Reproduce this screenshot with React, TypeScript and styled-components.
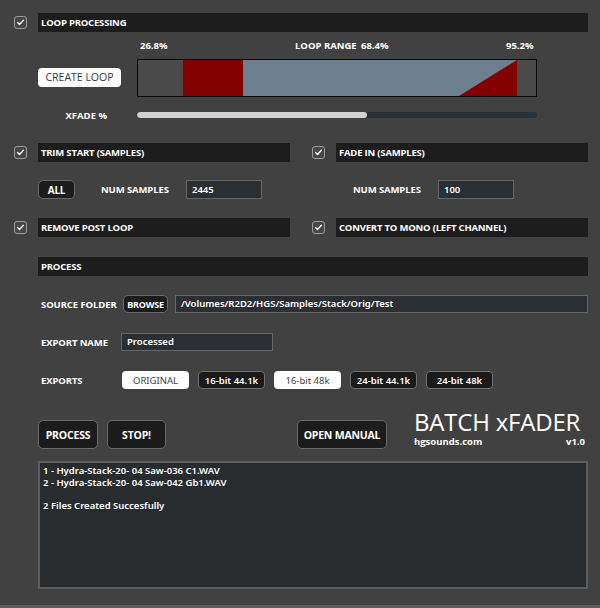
import React from 'react';
import styled, { createGlobalStyle } from 'styled-components';

const GlobalStyle = createGlobalStyle`
  html, body {
    margin: 0;
    padding: 0;
    background: #414141;
  }
  * {
    box-sizing: border-box;
  }
`;

const Window = styled.div`
  width: 600px;
  height: 608px;
  background: #414141;
  padding: 13px 12px 0 14px;
  font-family: 'Open Sans', 'Liberation Sans', sans-serif;
  color: #fff;
  display: flex;
  flex-direction: column;
  overflow: hidden;
  border-bottom: 3px solid #5c5c5c;
`;

const HeaderRow = styled.div<{ $mt?: number; $indent?: boolean }>`
  display: flex;
  align-items: center;
  gap: 11px;
  margin-top: ${(p) => p.$mt || 0}px;
  padding-left: ${(p) => (p.$indent ? 24 : 0)}px;
`;

const CheckBox = styled.div`
  width: 13px;
  height: 13px;
  border: 1px solid #9c9c9c;
  border-radius: 3px;
  background: #464646;
  display: flex;
  align-items: center;
  justify-content: center;
  flex-shrink: 0;
`;

const HeaderBar = styled.div`
  flex: 1;
  height: 19px;
  background: #1d1d1d;
  padding-left: 3px;
  font-size: 9.5px;
  font-weight: 700;
  line-height: 19px;
  letter-spacing: -0.2px;
  white-space: nowrap;
`;

const TwoCols = styled.div<{ $mt?: number }>`
  display: grid;
  grid-template-columns: 1fr 1fr;
  column-gap: 22px;
  margin-top: ${(p) => p.$mt || 0}px;
`;

const PercentRow = styled.div`
  display: flex;
  height: 10px;
  margin-top: 9px;
  align-items: center;
  font-size: 9.5px;
  font-weight: 700;
  white-space: nowrap;
`;

const Percent = styled.span<{ $at: number }>`
  position: absolute;
  left: ${(p) => p.$at}px;
`;

const PercentTrack = styled.div`
  position: relative;
  height: 10px;
  line-height: 10px;
  flex: 1;
`;

const BarRow = styled.div`
  display: flex;
  align-items: center;
  margin-top: 8px;
  padding-left: 24px;
  gap: 16px;
  height: 38px;
`;

const WhiteButton = styled.button<{ $w: number }>`
  width: ${(p) => p.$w}px;
  height: 19px;
  background: #fdfdfd;
  color: #3a3a3a;
  border: none;
  border-radius: 4px;
  font-family: 'Open Sans', 'Liberation Sans', sans-serif;
  font-size: 10.5px;
  padding: 0;
  margin-top: -2px;
`;

const LoopBox = styled.div`
  width: 400px;
  height: 38px;
  border: 1px solid #0a0a0a;
  background: #4a4a4a;
`;

const XfadeRow = styled.div`
  display: flex;
  align-items: center;
  margin-top: 13px;
  height: 10px;
`;

const XfadeLabel = styled.span`
  width: 93px;
  text-align: right;
  font-size: 9.5px;
  font-weight: 700;
  margin-right: 30px;
`;

const Slider = styled.div`
  width: 400px;
  height: 6px;
  border-radius: 3px;
  background: #29313a;
  overflow: hidden;
`;

const SliderFill = styled.div<{ $value: number }>`
  width: ${(p) => p.$value}%;
  height: 100%;
  border-radius: 3px;
  background: #d2d2d2;
`;

const ParamRow = styled.div<{ $pl: number }>`
  display: flex;
  align-items: center;
  height: 19px;
  margin-top: 18px;
  padding-left: ${(p) => p.$pl}px;
`;

const DarkButton = styled.button<{ $w: number; $h?: number; $fs?: number }>`
  width: ${(p) => p.$w}px;
  height: ${(p) => p.$h || 19}px;
  background: #1c1c1c;
  color: #fff;
  border: 1.5px solid #6a6a6a;
  border-radius: 5px;
  font-family: 'Open Sans', 'Liberation Sans', sans-serif;
  font-weight: 700;
  font-size: ${(p) => p.$fs || 10}px;
  letter-spacing: -0.2px;
  padding: 0;
  flex-shrink: 0;
  white-space: nowrap;
`;

const FieldLabel = styled.span<{ $w: number }>`
  width: ${(p) => p.$w}px;
  font-size: 9.5px;
  font-weight: 700;
  letter-spacing: -0.1px;
  white-space: nowrap;
  flex-shrink: 0;
`;

const Field = styled.div<{ $w?: number; $h?: number }>`
  ${(p) => (p.$w ? `width: ${p.$w}px;` : 'flex: 1;')}
  height: ${(p) => p.$h || 18}px;
  background: #2b2f33;
  border: 1px solid #666;
  padding-left: 5px;
  font-family: 'Noto Sans', 'DejaVu Sans', sans-serif;
  font-size: 9.5px;
  font-weight: 600;
  line-height: ${(p) => (p.$h || 18) - 2}px;
  white-space: nowrap;
  overflow: hidden;
`;

const ProcessRow = styled.div<{ $mt: number }>`
  display: flex;
  align-items: center;
  height: 18px;
  margin-top: ${(p) => p.$mt}px;
  padding-left: 27px;
`;

const ExportButton = styled.button<{ $on?: boolean }>`
  width: 67px;
  height: 18px;
  margin-right: 9px;
  border-radius: 4px;
  padding: 0;
  font-family: 'Noto Sans', 'DejaVu Sans', sans-serif;
  font-size: 9.5px;
  font-weight: ${(p) => (p.$on ? 400 : 600)};
  background: ${(p) => (p.$on ? '#fdfdfd' : '#1a1a1a')};
  color: ${(p) => (p.$on ? '#444' : '#fff')};
  border: ${(p) => (p.$on ? 'none' : '1.5px solid #707070')};
  white-space: nowrap;
`;

const BottomRow = styled.div`
  display: flex;
  align-items: flex-end;
  margin-top: 19px;
  padding-left: 24px;
  height: 41px;
`;

const ButtonGap = styled.div<{ $w: number }>`
  width: ${(p) => p.$w}px;
  flex-shrink: 0;
`;

const Brand = styled.div`
  width: 171px;
  display: flex;
  flex-direction: column;
  margin-left: 27px;
  align-self: flex-start;
`;

const BrandTitle = styled.div`
  font-size: 24px;
  font-weight: 400;
  line-height: 28px;
  letter-spacing: -0.2px;
  white-space: nowrap;
`;

const BrandSub = styled.div`
  display: flex;
  justify-content: space-between;
  font-size: 9.5px;
  font-weight: 700;
  line-height: 12px;
`;

const LogBox = styled.div`
  margin-top: 12px;
  margin-left: 24px;
  height: 128px;
  background: #282c2f;
  border: 2px solid #5c5c5c;
  padding: 2px 3px;
  font-family: 'Noto Sans', 'DejaVu Sans', sans-serif;
  font-size: 9.5px;
  font-weight: 600;
  line-height: 11.5px;
`;

const LogLine = styled.div`
  min-height: 11.5px;
  white-space: pre;
`;

const Check = () => (
  <CheckBox>
    <svg width="9" height="9" viewBox="0 0 9 9">
      <polyline points="1.6,4.6 3.5,6.5 7.4,2.3" fill="none" stroke="#fff" strokeWidth="1.4" strokeLinecap="round" strokeLinejoin="round" />
    </svg>
  </CheckBox>
);

const LoopDisplay = () => (
  <LoopBox>
    <svg width="398" height="36" viewBox="0 0 398 36">
      <rect x="0" y="0" width="398" height="36" fill="#4a4a4a" />
      <rect x="45" y="0" width="60" height="36" fill="#820000" />
      <rect x="105" y="0" width="274" height="36" fill="#6d7f8e" />
      <polygon points="321,36 379,0 379,36" fill="#820000" />
    </svg>
  </LoopBox>
);

const logLines = [
  '1 - Hydra-Stack-20- 04 Saw-036 C1.WAV',
  '2 - Hydra-Stack-20- 04 Saw-042 Gb1.WAV',
  '',
  '2 Files Created Succesfully',
];

const exportsList = [
  { label: 'ORIGINAL', on: true },
  { label: '16-bit 44.1k', on: false },
  { label: '16-bit 48k', on: true },
  { label: '24-bit 44.1k', on: false },
  { label: '24-bit 48k', on: false },
];

export default function App() {
  return (
    <>
      <GlobalStyle />
      <Window>
        <HeaderRow>
          <Check />
          <HeaderBar>LOOP PROCESSING</HeaderBar>
        </HeaderRow>

        <PercentRow>
          <PercentTrack>
            <Percent $at={126}>26.8%</Percent>
            <Percent $at={281}>LOOP RANGE</Percent>
            <Percent $at={347}>68.4%</Percent>
            <Percent $at={492}>95.2%</Percent>
          </PercentTrack>
        </PercentRow>

        <BarRow>
          <WhiteButton $w={83}>CREATE LOOP</WhiteButton>
          <LoopDisplay />
        </BarRow>

        <XfadeRow>
          <XfadeLabel>XFADE %</XfadeLabel>
          <Slider>
            <SliderFill $value={57.5} />
          </Slider>
        </XfadeRow>

        <TwoCols $mt={23}>
          <HeaderRow>
            <Check />
            <HeaderBar>TRIM START (SAMPLES)</HeaderBar>
          </HeaderRow>
          <HeaderRow>
            <Check />
            <HeaderBar>FADE IN (SAMPLES)</HeaderBar>
          </HeaderRow>
          <ParamRow $pl={24}>
            <DarkButton $w={37}>ALL</DarkButton>
            <ButtonGap $w={26} />
            <FieldLabel $w={85}>NUM SAMPLES</FieldLabel>
            <Field $w={76} $h={19}>2445</Field>
          </ParamRow>
          <ParamRow $pl={41}>
            <FieldLabel $w={85}>NUM SAMPLES</FieldLabel>
            <Field $w={76} $h={19}>100</Field>
          </ParamRow>
        </TwoCols>

        <TwoCols $mt={19}>
          <HeaderRow>
            <Check />
            <HeaderBar>REMOVE POST LOOP</HeaderBar>
          </HeaderRow>
          <HeaderRow>
            <Check />
            <HeaderBar>CONVERT TO MONO (LEFT CHANNEL)</HeaderBar>
          </HeaderRow>
        </TwoCols>

        <HeaderRow $mt={20} $indent>
          <HeaderBar>PROCESS</HeaderBar>
        </HeaderRow>

        <ProcessRow $mt={19}>
          <FieldLabel $w={82}>SOURCE FOLDER</FieldLabel>
          <DarkButton $w={45} $h={18} $fs={9}>BROWSE</DarkButton>
          <ButtonGap $w={7} />
          <Field>/Volumes/R2D2/HGS/Samples/Stack/Orig/Test</Field>
        </ProcessRow>

        <ProcessRow $mt={20}>
          <FieldLabel $w={80}>EXPORT NAME</FieldLabel>
          <Field $w={152}>Processed</Field>
        </ProcessRow>

        <ProcessRow $mt={20}>
          <FieldLabel $w={81}>EXPORTS</FieldLabel>
          {exportsList.map((e) => (
            <ExportButton key={e.label} $on={e.on}>
              {e.label}
            </ExportButton>
          ))}
        </ProcessRow>

        <BottomRow>
          <DarkButton $w={60} $h={29} $fs={10.5}>PROCESS</DarkButton>
          <ButtonGap $w={9} />
          <DarkButton $w={59} $h={29} $fs={10.5}>STOP!</DarkButton>
          <ButtonGap $w={131} />
          <DarkButton $w={90} $h={29} $fs={10.5}>OPEN MANUAL</DarkButton>
          <Brand>
            <BrandTitle>BATCH xFADER</BrandTitle>
            <BrandSub>
              <span>hgsounds.com</span>
              <span>v1.0</span>
            </BrandSub>
          </Brand>
        </BottomRow>

        <LogBox>
          {logLines.map((l, i) => (
            <LogLine key={i}>{l}</LogLine>
          ))}
        </LogBox>
      </Window>
    </>
  );
}
